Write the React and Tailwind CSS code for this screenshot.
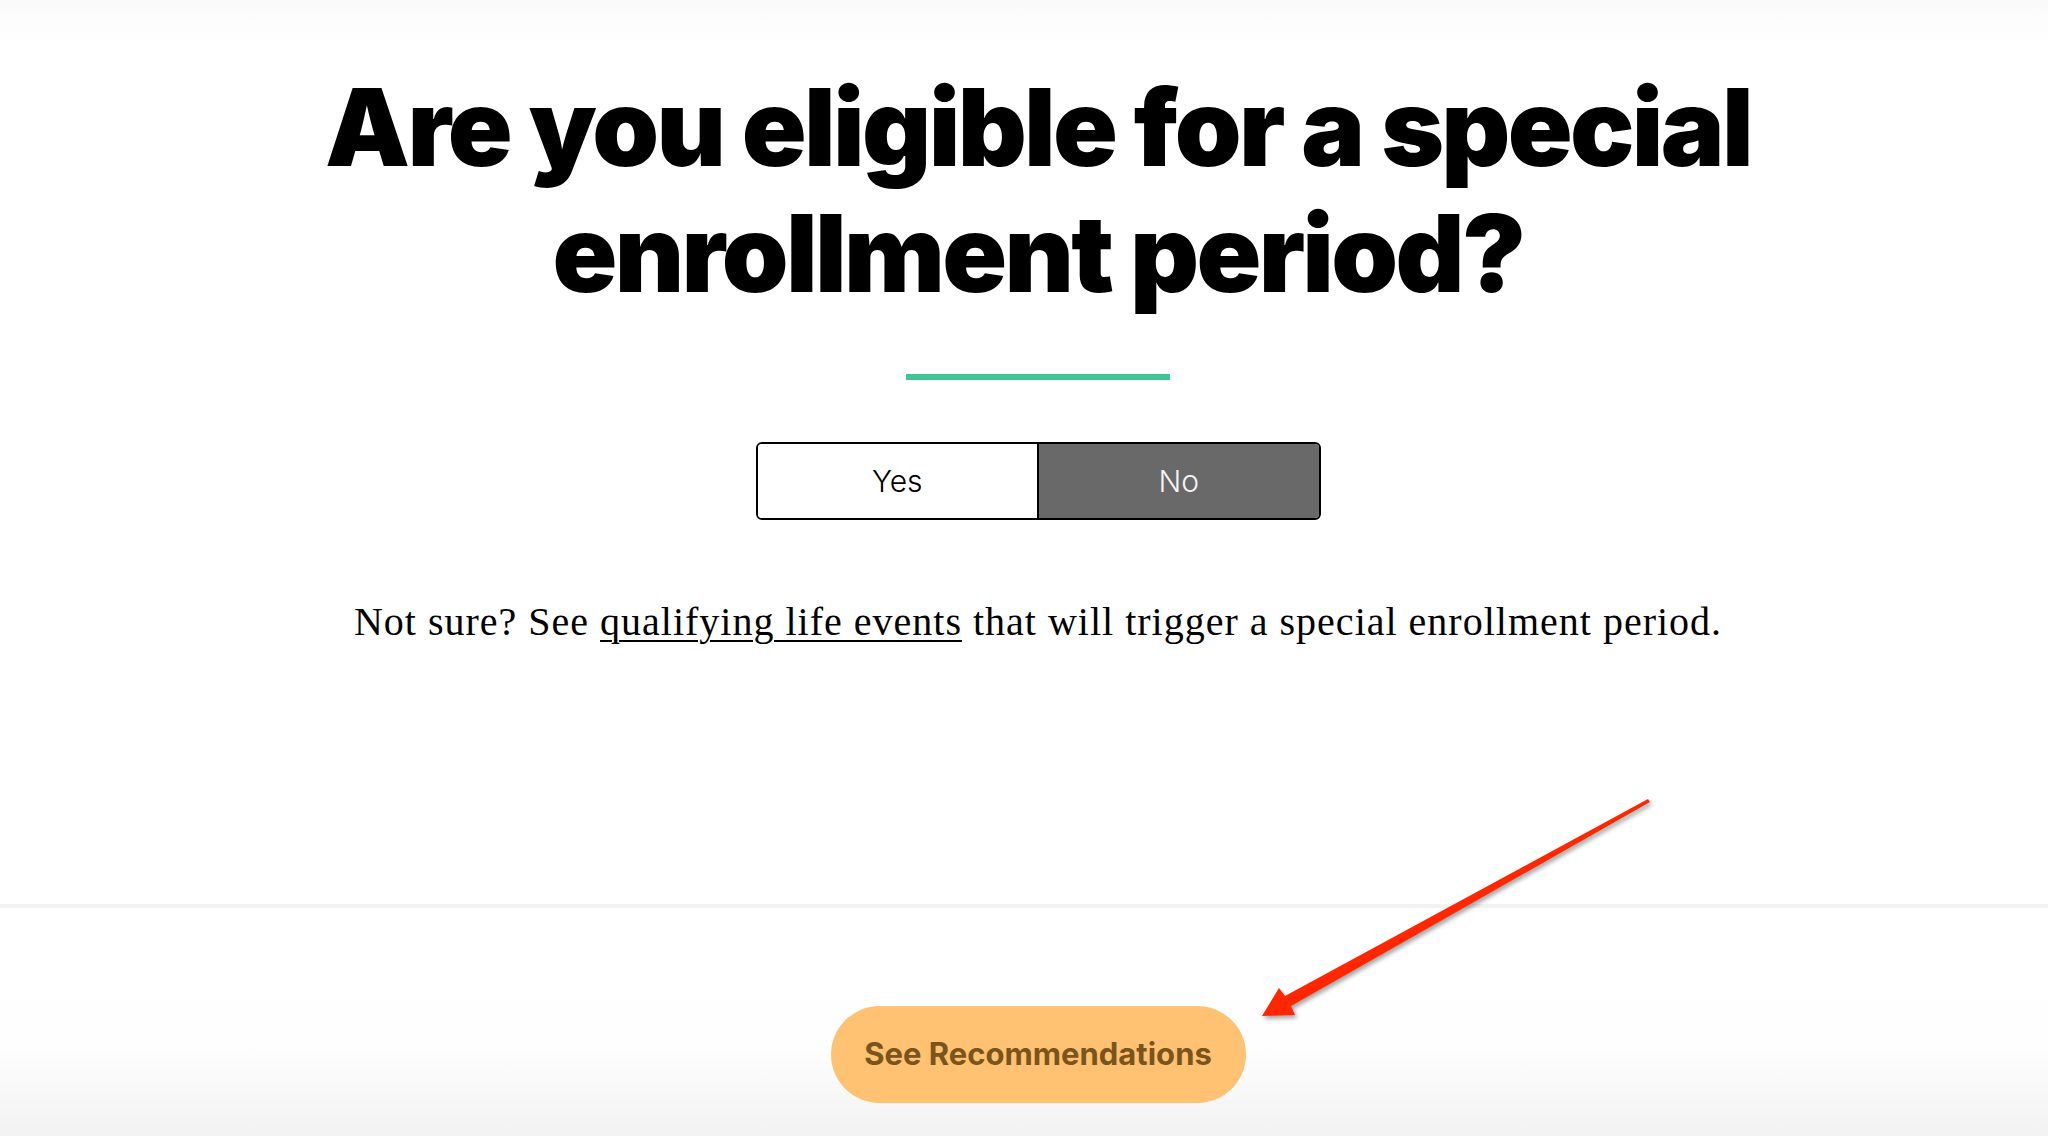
import React from "react";

export default function App() {
  return (
    <div className="relative flex h-[1136px] w-full flex-col overflow-hidden bg-white font-['Inter','Liberation_Sans',sans-serif]">
      <div className="flex h-[904px] flex-col items-center bg-[linear-gradient(to_bottom,#fafafa_0px,#ffffff_45px)] pl-[28px]">
        <h1 className="mt-[64px] text-center text-[107px] font-black leading-[126px] tracking-[-0.025em] text-black">
          Are you eligible for a special
          <br />
          enrollment period?
        </h1>
        <div className="mt-[58px] h-[6px] w-[264px] bg-[#3ec795]" />
        <div className="mt-[62px] flex h-[78px] w-[565px] overflow-hidden rounded-[6px] border-2 border-black">
          <button className="flex flex-1 items-center justify-center bg-white text-[30px] font-light text-black">
            Yes
          </button>
          <button className="flex flex-1 items-center justify-center border-l-2 border-black bg-[#696969] text-[30px] font-light text-[#f4f4f4]">
            No
          </button>
        </div>
        <p className="mt-[72px] font-['Liberation_Serif',serif] text-[40px] tracking-[1px] text-black">
          Not sure? See{" "}
          <a className="underline decoration-[2px] underline-offset-[5px]" href="#">
            qualifying life events
          </a>{" "}
          that will trigger a special enrollment period.
        </p>
      </div>
      <div className="h-[4px] w-full bg-[#f2f2f2]" />
      <div className="flex flex-1 justify-center bg-[linear-gradient(to_bottom,#ffffff_0%,#fefefe_60%,#f2f2f2_100%)] pl-[28px] pt-[98px]">
        <button className="flex h-[97px] w-[415px] items-center justify-center rounded-full bg-[#fec272] text-[31px] font-bold text-[#7a541b]">
          See Recommendations
        </button>
      </div>
      <svg
        className="pointer-events-none absolute left-0 top-0 drop-shadow-[2px_3px_2px_rgba(0,0,0,0.35)]"
        width="2048"
        height="1136"
        viewBox="0 0 2048 1136"
      >
        <polygon
          points="1648,799 1650,802 1291,1006 1295,1015 1262,1016 1279,988 1285,996"
          fill="#ff2600"
        />
      </svg>
    </div>
  );
}
